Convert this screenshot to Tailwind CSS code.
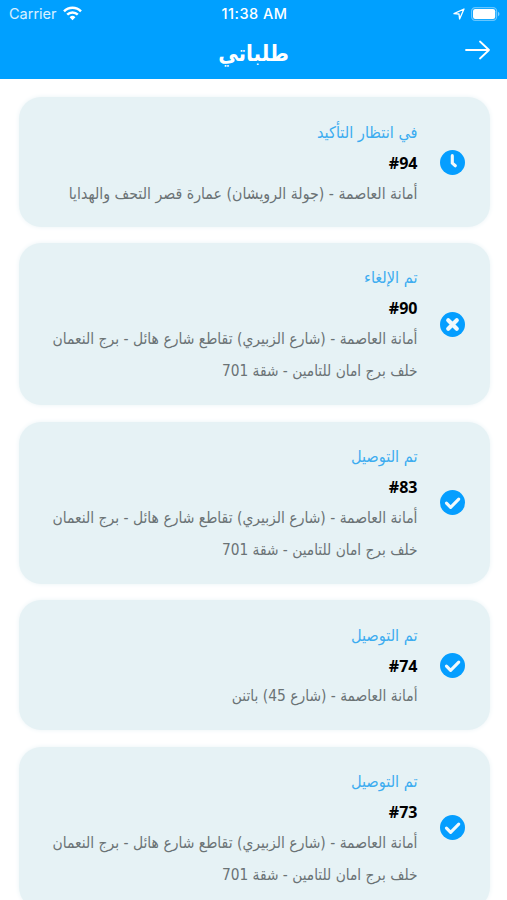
<!DOCTYPE html>
<html lang="ar" dir="rtl">
  <head>
    <meta charset="UTF-8" />
    <meta name="viewport" content="width=device-width, initial-scale=1.0" />
    <title>طلباتي</title>
    <script src="https://cdn.jsdelivr.net/npm/@tailwindcss/browser@4"></script>
  </head>
  <body
    class="bg-white h-[900px] overflow-hidden font-['DejaVu_Sans_Condensed','DejaVu_Sans',sans-serif]"
  >
    <!-- Icon shapes shared by the order cards -->
    <svg class="hidden">
      <symbol id="icon-clock" viewBox="0 0 24 24">
        <circle cx="12" cy="12" r="12" fill="#059eff" />
        <path d="M11.8 5.4v7.2l2.9 2.5" fill="none" stroke="#f1f9fc" stroke-width="3" stroke-linecap="round" stroke-linejoin="round" />
      </symbol>
      <symbol id="icon-cancel" viewBox="0 0 24 24">
        <circle cx="12" cy="12" r="12" fill="#059eff" />
        <path d="M7.9 7.9l8.2 8.2M16.1 7.9l-8.2 8.2" stroke="#f1f9fc" stroke-width="4" stroke-linecap="round" />
      </symbol>
      <symbol id="icon-check" viewBox="0 0 24 24">
        <circle cx="12" cy="12" r="12" fill="#059eff" />
        <path d="M6.2 12.6l4 4 7.8-7.8" fill="none" stroke="#f1f9fc" stroke-width="3" stroke-linecap="round" stroke-linejoin="round" />
      </symbol>
    </svg>

    <header class="bg-[#00a0ff] h-[79px] text-white">
      <!-- Status bar -->
      <div
        dir="ltr"
        class="h-[27px] grid grid-cols-3 items-center pl-[9px] pr-[7px] text-[14.5px] font-[Inter,sans-serif]"
      >
        <div class="flex items-center gap-1.5">
          <span class="text-white/85">Carrier</span>
          <svg class="w-[19px] h-[15px]" viewBox="0 0 19 15" fill="none" stroke="white" stroke-width="2.5">
            <path d="M1 5.4a12 12 0 0 1 17 0" />
            <path d="M4.2 8.7a7.5 7.5 0 0 1 10.6 0" />
            <path d="M9.5 14.3l-2.9-3a4.1 4.1 0 0 1 5.8 0z" fill="white" stroke="none" />
          </svg>
        </div>
        <div class="text-center whitespace-nowrap font-medium tracking-[0.5px]">11:38 AM</div>
        <div class="flex items-center justify-end gap-1.5">
          <svg class="w-3 h-3" viewBox="0 0 12 12" fill="none" stroke="white" stroke-width="1.3" stroke-linejoin="round">
            <path d="M1 5.7L11 1 6.6 11 6 6z" />
          </svg>
          <svg class="w-[29px] h-[14px]" viewBox="0 0 29 14">
            <rect x="0.6" y="0.6" width="25" height="12.8" rx="3.6" fill="none" stroke="white" stroke-opacity="0.4" stroke-width="1.2" />
            <rect x="2" y="2" width="22.2" height="10" rx="2.2" fill="white" />
            <path d="M27 4.8c2 .8 2 3.6 0 4.4z" fill="white" fill-opacity="0.5" />
          </svg>
        </div>
      </div>

      <!-- Title bar -->
      <div class="h-[52px] grid grid-cols-[1fr_auto_1fr] items-center px-[17px]">
        <svg class="w-[25px] h-5 -mt-1.5" viewBox="0 0 25 20" fill="none" stroke="white" stroke-width="1.8" stroke-linecap="round" stroke-linejoin="round">
          <path d="M1 10h23M15 1.5l9 8.5-9 8.5" />
        </svg>
        <h1 class="text-[22.3px] font-bold leading-none">طلباتي</h1>
      </div>
    </header>

    <main class="flex flex-col gap-[16.4px] pt-[18px] pl-[19px] pr-[17.5px]">
      <article class="flex items-center shrink-0 h-[130px] rounded-[22px] bg-[#e6f2f5] shadow-[0_0_5px_#eaf3f6] pr-[25px]">
        <svg class="size-[25px] shrink-0"><use href="#icon-clock" /></svg>
        <div class="mr-[22px] pt-0.5 whitespace-nowrap">
          <p class="leading-[30px] text-[16.2px] text-[#3cacf0]">في انتظار التأكيد</p>
          <p class="leading-[30px] text-base font-bold text-black font-['Open_Sans',sans-serif]">#94</p>
          <p class="leading-[31px] text-[15.75px] text-[#6b7375]">أمانة العاصمة - (جولة الرويشان) عمارة قصر التحف والهدايا</p>
        </div>
      </article>

      <article class="flex items-center shrink-0 h-[162px] rounded-[22px] bg-[#e6f2f5] shadow-[0_0_5px_#eaf3f6] pr-[25px]">
        <svg class="size-[25px] shrink-0"><use href="#icon-cancel" /></svg>
        <div class="mr-[22px] pt-0.5 whitespace-nowrap">
          <p class="leading-[30px] text-[16.2px] text-[#3cacf0]">تم الإلغاء</p>
          <p class="leading-[30px] text-base font-bold text-black font-['Open_Sans',sans-serif]">#90</p>
          <p class="leading-8 text-[15.5px] text-[#6b7375]">أمانة العاصمة - (شارع الزبيري) تقاطع شارع هائل - برج النعمان<br /><span class="text-[15.3px]">خلف برج امان للتامين - شقة 701</span></p>
        </div>
      </article>

      <article class="flex items-center shrink-0 h-[162px] rounded-[22px] bg-[#e6f2f5] shadow-[0_0_5px_#eaf3f6] pr-[25px]">
        <svg class="size-[25px] shrink-0"><use href="#icon-check" /></svg>
        <div class="mr-[22px] pt-0.5 whitespace-nowrap">
          <p class="leading-[30px] text-[16.2px] text-[#3cacf0]">تم التوصيل</p>
          <p class="leading-[30px] text-base font-bold text-black font-['Open_Sans',sans-serif]">#83</p>
          <p class="leading-8 text-[15.5px] text-[#6b7375]">أمانة العاصمة - (شارع الزبيري) تقاطع شارع هائل - برج النعمان<br /><span class="text-[15.3px]">خلف برج امان للتامين - شقة 701</span></p>
        </div>
      </article>

      <article class="flex items-center shrink-0 h-[130px] rounded-[22px] bg-[#e6f2f5] shadow-[0_0_5px_#eaf3f6] pr-[25px]">
        <svg class="size-[25px] shrink-0"><use href="#icon-check" /></svg>
        <div class="mr-[22px] pt-0.5 whitespace-nowrap">
          <p class="leading-[30px] text-[16.2px] text-[#3cacf0]">تم التوصيل</p>
          <p class="leading-[30px] text-base font-bold text-black font-['Open_Sans',sans-serif]">#74</p>
          <p class="leading-[31px] text-[15.4px] text-[#6b7375]">أمانة العاصمة - (شارع 45) باتنن</p>
        </div>
      </article>

      <article class="flex items-center shrink-0 h-[162px] rounded-[22px] bg-[#e6f2f5] shadow-[0_0_5px_#eaf3f6] pr-[25px]">
        <svg class="size-[25px] shrink-0"><use href="#icon-check" /></svg>
        <div class="mr-[22px] pt-0.5 whitespace-nowrap">
          <p class="leading-[30px] text-[16.2px] text-[#3cacf0]">تم التوصيل</p>
          <p class="leading-[30px] text-base font-bold text-black font-['Open_Sans',sans-serif]">#73</p>
          <p class="leading-8 text-[15.5px] text-[#6b7375]">أمانة العاصمة - (شارع الزبيري) تقاطع شارع هائل - برج النعمان<br /><span class="text-[15.3px]">خلف برج امان للتامين - شقة 701</span></p>
        </div>
      </article>
    </main>
  </body>
</html>
